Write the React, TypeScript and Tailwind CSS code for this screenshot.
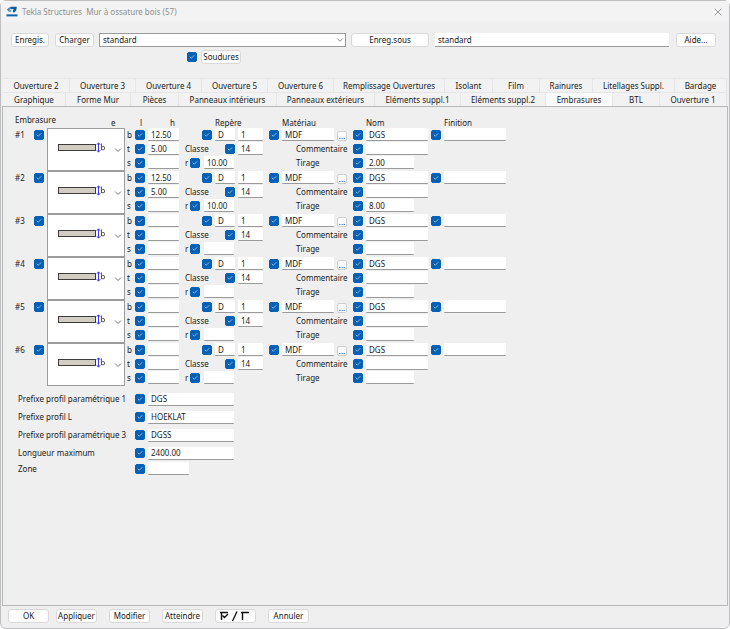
import React, { useState } from "react";
import { Check, ChevronDown, X } from "lucide-react";

type Opening = {
  id: number;
  b: string;
  t: string;
  r: string;
  tirage: string;
};

const openings: Opening[] = [
  { id: 1, b: "12.50", t: "5.00", r: "10.00", tirage: "2.00" },
  { id: 2, b: "12.50", t: "5.00", r: "10.00", tirage: "8.00" },
  { id: 3, b: "", t: "", r: "", tirage: "" },
  { id: 4, b: "", t: "", r: "", tirage: "" },
  { id: 5, b: "", t: "", r: "", tirage: "" },
  { id: 6, b: "", t: "", r: "", tirage: "" },
];

const upperTabs = [
  { name: "Ouverture 2", width: "basis-[67px]" },
  { name: "Ouverture 3", width: "basis-[66px]" },
  { name: "Ouverture 4", width: "basis-[66px]" },
  { name: "Ouverture 5", width: "basis-[66px]" },
  { name: "Ouverture 6", width: "basis-[66px]" },
  { name: "Remplissage Ouvertures", width: "basis-[111px]" },
  { name: "Isolant", width: "basis-[48px]" },
  { name: "Film", width: "basis-[47px]" },
  { name: "Rainures", width: "basis-[53px]" },
  { name: "Litellages Suppl.", width: "basis-[82px]" },
  { name: "Bardage", width: "basis-[52px]" },
];

const lowerTabs = [
  { name: "Graphique", width: "basis-[63px]" },
  { name: "Forme Mur", width: "basis-[65px]" },
  { name: "Pièces", width: "basis-[48px]" },
  { name: "Panneaux intérieurs", width: "basis-[98px]" },
  { name: "Panneaux extérieurs", width: "basis-[98px]" },
  { name: "Eléments suppl.1", width: "basis-[86px]" },
  { name: "Eléments suppl.2", width: "basis-[85px]" },
  { name: "Embrasures", width: "basis-[67px]" },
  { name: "BTL", width: "basis-[47px]" },
  { name: "Ouverture 1", width: "basis-[67px]" },
];

const prefixes = [
  { label: "Prefixe profil paramétrique 1", value: "DGS" },
  { label: "Prefixe profil L", value: "HOEKLAT" },
  { label: "Prefixe profil paramétrique 3", value: "DGSS" },
  { label: "Longueur maximum", value: "2400.00" },
];

const Tick = ({ label }: { label: string }) => (
  <span className="grid size-[10px] shrink-0">
    <input
      type="checkbox"
      defaultChecked
      aria-label={label}
      className="peer col-start-1 row-start-1 size-[10px] appearance-none rounded-[2px] border border-[#8a8a8a] bg-white checked:border-[#0560b6] checked:bg-[#0560b6]"
    />
    <Check
      className="pointer-events-none col-start-1 row-start-1 hidden size-[6px] place-self-center text-[#b9d6f0] peer-checked:block"
      strokeWidth={3}
    />
  </span>
);

const Field = ({
  label,
  value = "",
  width,
}: {
  label: string;
  value?: string;
  width: string;
}) => (
  <input
    type="text"
    aria-label={label}
    defaultValue={value}
    className={`h-[13px] shrink-0 rounded-[1px] border-b border-[#9a9a9a] bg-white px-[3px] outline-none ${width}`}
  />
);

const PushButton = ({
  children,
  width,
  label,
}: {
  children: React.ReactNode;
  width: string;
  label?: string;
}) => (
  <button
    type="button"
    aria-label={label}
    className={`flex h-[14px] shrink-0 items-center justify-center rounded-[3px] border border-[#d9d9d9] bg-[#fdfdfd] whitespace-nowrap ${width}`}
  >
    {children}
  </button>
);

const TeklaLogo = () => (
  <svg viewBox="0 0 12 11" className="h-[11px] w-[12px]" aria-hidden="true">
    <path d="M1 3.6 Q2 1.6 4.4 1 L3.6 3.2 L5.6 5.2 L4 6 Q1.4 5.6 1 3.6 Z" fill="#4b8fc2" />
    <path d="M4.4 0.8 H10.8 L10.2 4.6 L8 6.8 L6.6 5.6 L7.6 3 L4.2 3.2 Z" fill="#0d5c9c" />
    <path d="M0.5 8.4 H11.5 V10.4 H0.5 Z" fill="#0d63a5" />
  </svg>
);

const ProfilePicker = ({ id }: { id: number }) => (
  <span className="grid h-[43px] w-[78px] shrink-0">
    <select
      aria-label={`Profil #${id}`}
      className="col-start-1 row-start-1 appearance-none border border-[#9c9c9c] bg-white"
    >
      <option value="b" aria-label="Profil b" />
    </select>
    <svg
      viewBox="0 0 78 43"
      className="pointer-events-none col-start-1 row-start-1 h-[43px] w-[78px]"
      aria-hidden="true"
    >
      <rect x="11.5" y="16.5" width="37" height="6" fill="#d3cec4" stroke="#3c3c3c" />
      <path
        d="M51.5 15 V24 M49.8 16.8 L51.5 14.8 L53.2 16.8 M49.8 22.2 L51.5 24.2 L53.2 22.2"
        fill="none"
        stroke="#3a3aff"
      />
      <path
        d="M54.5 15.5 V22 M54.5 19.5 Q55.5 18 57 18.6 Q58.3 20 57.2 21.6 Q56 22.5 54.5 21"
        fill="none"
        stroke="#333"
        strokeWidth="0.8"
      />
      <path d="M68 20.5 L71 23.5 L74 20.5" fill="none" stroke="#777" />
    </svg>
  </span>
);

const OpeningRow = ({ opening }: { opening: Opening }) => {
  const { id, b, t, r, tirage } = opening;
  const tag = `#${id}`;
  const column = "grid h-[41px] grid-rows-[13px_13px_13px] content-between";

  return (
    <div className="flex h-[43px]">
      <div className="flex h-[13px] w-[32px] items-center">
        <span className="w-[19px]">{tag}</span>
        <Tick label={`Embrasure ${tag}`} />
      </div>

      <ProfilePicker id={id} />

      <div className={`ml-[2px] w-[58px] ${column}`}>
        {[
          ["b", b],
          ["t", t],
          ["s", ""],
        ].map(([name, value]) => (
          <div key={name} className="flex items-center">
            <span className="w-[8px]">{name}</span>
            <Tick label={`${name} ${tag}`} />
            <span className="w-[3px]" />
            <Field label={`Valeur ${name} ${tag}`} value={value} width="w-[31px]" />
          </div>
        ))}
      </div>

      <div className={`w-[78px] ${column}`}>
        <div className="flex items-center justify-end gap-[3px]">
          <Tick label={`Repère ${tag}`} />
          <Field label={`Préfixe repère ${tag}`} value="D" width="w-[20px]" />
          <Field label={`Numéro repère ${tag}`} value="1" width="w-[25px]" />
        </div>
        <div className="flex items-center justify-between">
          <span>Classe</span>
          <span className="flex items-center gap-[3px]">
            <Tick label={`Classe ${tag}`} />
            <Field label={`Valeur classe ${tag}`} value="14" width="w-[25px]" />
          </span>
        </div>
        <div className="flex items-center">
          <span className="w-[5px]">r</span>
          <Tick label={`r ${tag}`} />
          <span className="w-[4px]" />
          <Field label={`Valeur r ${tag}`} value={r} width="w-[30px]" />
        </div>
      </div>

      <div className={`ml-[6px] w-[78px] ${column}`}>
        <div className="flex items-center gap-[3px]">
          <Tick label={`Matériau ${tag}`} />
          <Field label={`Valeur matériau ${tag}`} value="MDF" width="w-[52px]" />
          <button
            type="button"
            aria-label={`Choisir matériau ${tag}`}
            className="flex h-[10px] w-[10px] items-center justify-center self-end rounded-[2px] border border-[#d0d0d0] bg-[#fdfdfd] leading-none"
          >
            ...
          </button>
        </div>
        <span className="flex items-center pl-[27px]">Commentaire</span>
        <span className="flex items-center pl-[27px]">Tirage</span>
      </div>

      <div className={`ml-[6px] w-[75px] ${column}`}>
        <div className="flex items-center gap-[3px]">
          <Tick label={`Nom ${tag}`} />
          <Field label={`Valeur nom ${tag}`} value="DGS" width="w-[62px]" />
        </div>
        <div className="flex items-center gap-[3px]">
          <Tick label={`Commentaire ${tag}`} />
          <Field label={`Valeur commentaire ${tag}`} width="w-[62px]" />
        </div>
        <div className="flex items-center gap-[3px]">
          <Tick label={`Tirage ${tag}`} />
          <Field label={`Valeur tirage ${tag}`} value={tirage} width="w-[48px]" />
        </div>
      </div>

      <div className="ml-[3px] flex h-[13px] items-center gap-[3px]">
        <Tick label={`Finition ${tag}`} />
        <Field label={`Valeur finition ${tag}`} width="w-[62px]" />
      </div>
    </div>
  );
};

const App = () => {
  const [activeTab, setActiveTab] = useState("Embrasures");

  return (
    <div className="flex min-h-screen flex-col rounded-[6px] border border-[#bfbfc2] bg-[#efefef] font-['Noto_Sans',sans-serif] text-[8px] leading-[12px] text-[#1a1a1a]">
      <header className="flex h-[21px] items-center bg-[#f3f3f3] pr-[5px] pl-[5px]">
        <TeklaLogo />
        <h1 className="ml-[4px] whitespace-pre text-[#8f8f8f]">
          {"Tekla Structures  Mur à ossature bois (57)"}
        </h1>
        <button type="button" aria-label="Fermer" className="ml-auto text-[#9a9a9a]">
          <X className="size-[12px]" strokeWidth={2} />
        </button>
      </header>

      <div className="mt-[11px] flex items-center pr-[13px] pl-[10px]">
        <PushButton width="w-[38px]">Enregis.</PushButton>
        <span className="w-[6px]" />
        <PushButton width="w-[39px]">Charger</PushButton>
        <span className="ml-[5px] grid w-[247px]">
          <select
            aria-label="Attributs"
            className="col-start-1 row-start-1 h-[14px] appearance-none border border-[#9a9a9a] bg-white px-[3px]"
          >
            <option>standard</option>
          </select>
          <ChevronDown
            className="pointer-events-none col-start-1 row-start-1 mr-[1px] size-[10px] self-center justify-self-end text-[#777]"
            strokeWidth={2}
          />
        </span>
        <span className="w-[5px]" />
        <PushButton width="w-[78px]">Enreg.sous</PushButton>
        <input
          type="text"
          aria-label="Enregistrer sous"
          defaultValue="standard"
          className="ml-[6px] h-[14px] min-w-0 flex-1 border-b border-[#9a9a9a] bg-white px-[3px] outline-none"
        />
        <span className="w-[7px]" />
        <PushButton width="w-[40px]">Aide...</PushButton>
      </div>

      <div className="mt-[3px] flex items-center gap-[4px] pl-[186px]">
        <Tick label="Soudures" />
        <PushButton width="w-[40px]">Soudures</PushButton>
      </div>

      <nav role="tablist" className="mt-[14px] px-[2px]">
        {[upperTabs, lowerTabs].map((tabs, row) => (
          <div key={row} className="flex">
            {tabs.map(({ name, width }) => (
              <button
                key={name}
                type="button"
                role="tab"
                aria-selected={name === activeTab}
                onClick={() => setActiveTab(name)}
                className={`h-[14px] grow border-t border-r border-[#e6e6e6] whitespace-nowrap ${width} ${
                  name === activeTab ? "bg-[#fafafa]" : "bg-[#f2f2f2]"
                }`}
              >
                {name}
              </button>
            ))}
          </div>
        ))}
      </nav>

      <main className="mr-px ml-px flex-1 border border-[#b4bab8] pt-[7px] pl-[12px]">
        <div className="flex h-[14px]">
          <span className="w-[96px]">Embrasure</span>
          <div className="flex pt-[3px]">
            <span className="w-[29px]">e</span>
            <span className="w-[30px]">l</span>
            <span className="w-[45px]">h</span>
            <span className="w-[67px]">Repère</span>
            <span className="w-[84px]">Matériau</span>
            <span className="w-[78px]">Nom</span>
            <span>Finition</span>
          </div>
        </div>

        {openings.map((opening) => (
          <OpeningRow key={opening.id} opening={opening} />
        ))}

        <div className="mt-[4px] pl-[3px]">
          {prefixes.map(({ label, value }) => (
            <div key={label} className="flex h-[18px] items-center">
              <span className="w-[117px]">{label}</span>
              <Tick label={`Activer ${label}`} />
              <span className="w-[3px]" />
              <Field label={label} value={value} width="w-[86px]" />
            </div>
          ))}
          <div className="flex h-[13px] items-center">
            <span className="w-[117px]">Zone</span>
            <Tick label="Activer Zone" />
            <span className="w-[3px]" />
            <Field label="Zone" width="w-[41px]" />
          </div>
        </div>
      </main>

      <footer className="flex h-[22px] items-start gap-[12px] pt-[3px] pl-[7px]">
        <div className="flex gap-[7px]">
          <PushButton width="w-[41px]">OK</PushButton>
          <PushButton width="w-[41px]">Appliquer</PushButton>
        </div>
        <PushButton width="w-[41px]">Modifier</PushButton>
        <PushButton width="w-[41px]">Atteindre</PushButton>
        <PushButton width="w-[41px]" label="Tout cocher ou décocher">
          <svg
            viewBox="0 0 32 12"
            className="h-[12px] w-[32px]"
            fill="none"
            stroke="#111"
            aria-hidden="true"
          >
            <path d="M0 2.5 H8 M1.5 2 V10 M2.5 5.5 L4.5 7.5 L8 4" strokeWidth="1.4" />
            <path d="M12.5 11 L17 1.5" strokeWidth="1.3" />
            <path d="M21 2.5 H29 M22.5 2 V10" strokeWidth="1.4" />
          </svg>
        </PushButton>
        <PushButton width="w-[41px]">Annuler</PushButton>
      </footer>
    </div>
  );
};

export default App;
